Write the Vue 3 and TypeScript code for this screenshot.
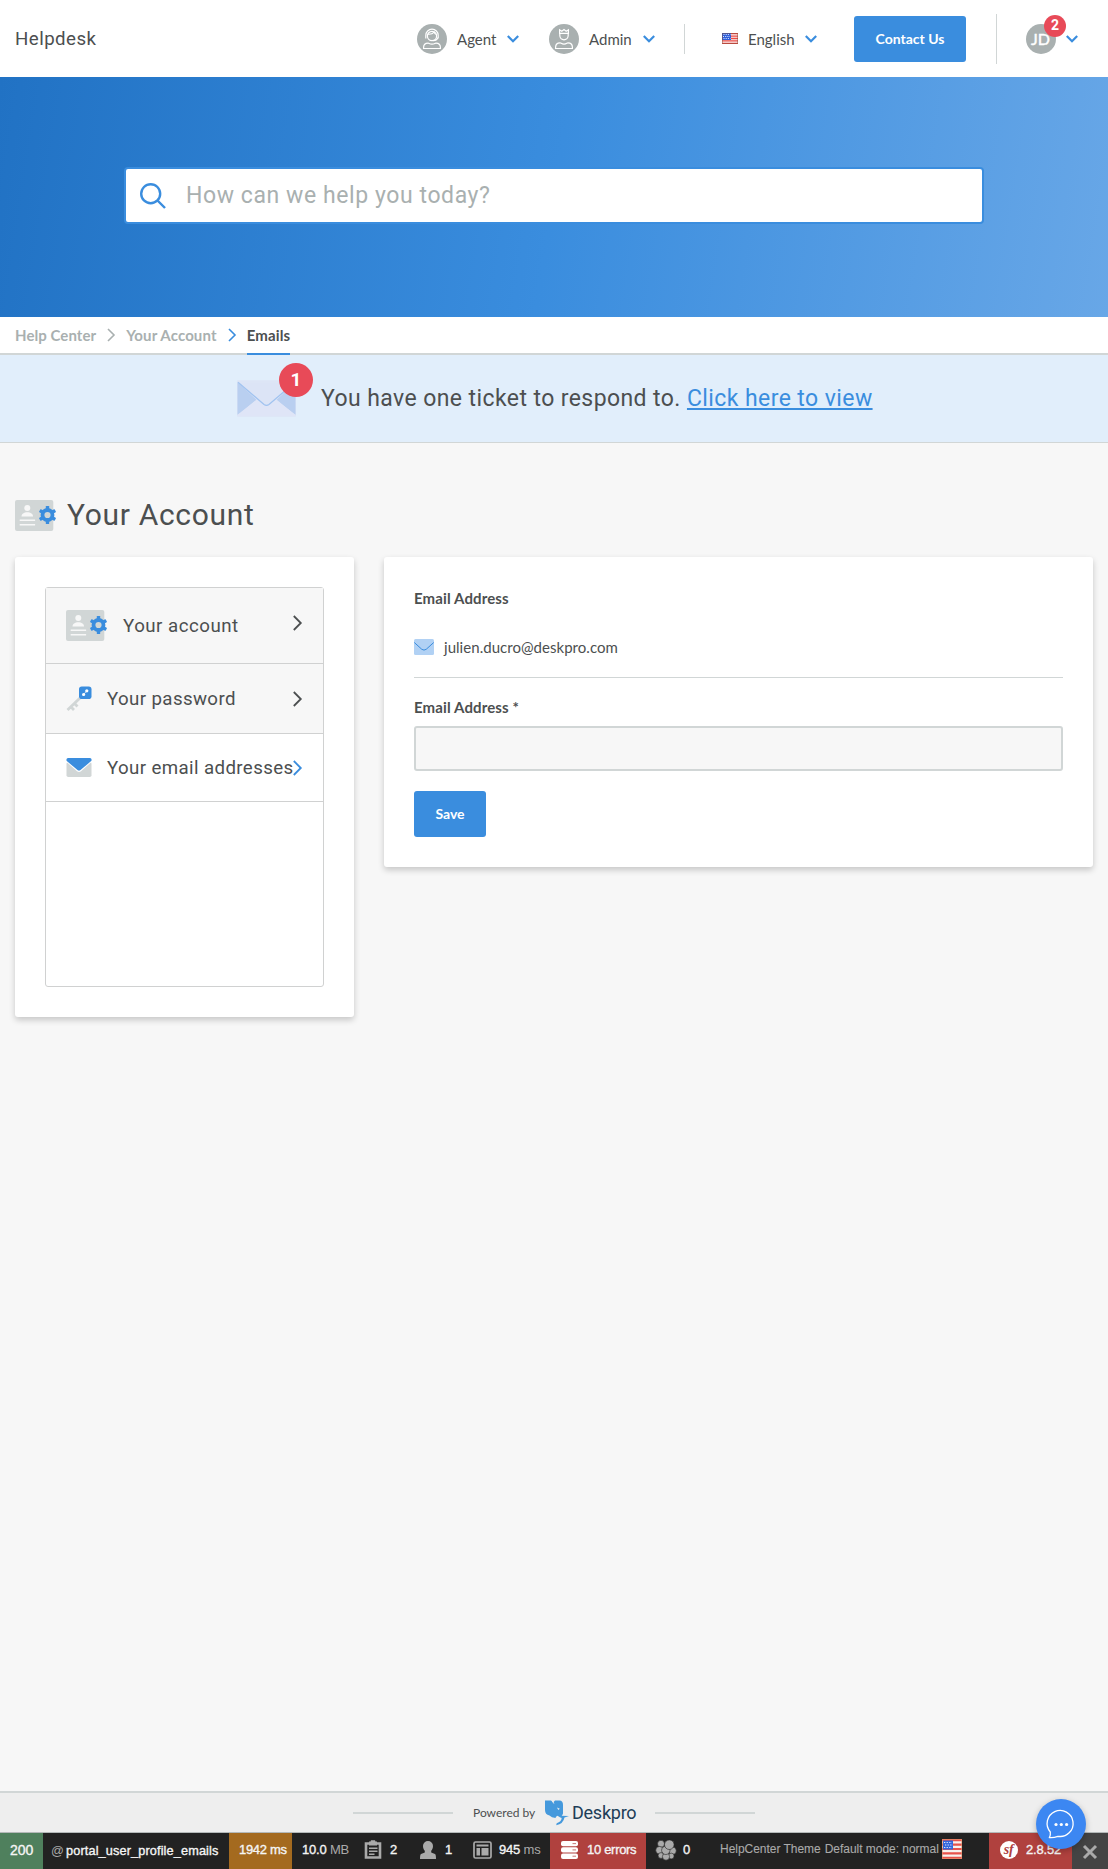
<script setup lang="ts">
interface MenuItem {
  label: string
  icon: 'card' | 'key' | 'mail'
  height: number
  active?: boolean
}

const menu: MenuItem[] = [
  { label: 'Your account', icon: 'card', height: 76 },
  { label: 'Your password', icon: 'key', height: 70 },
  { label: 'Your email addresses', icon: 'mail', height: 68, active: true },
]

const cogTeeth = [0, 60, 120, 180, 240, 300]
</script>

<template>
  <div class="page">
    <header class="header">
      <div class="brand">Helpdesk</div>
      <nav class="nav">
        <a class="nav-item agent">
          <svg class="avatar" viewBox="0 0 30 30">
            <circle cx="15" cy="15" r="15" fill="#a9b0b0" />
            <g fill="none" stroke="#fff" stroke-width="1.2">
              <circle cx="15" cy="12" r="4.6" />
              <path d="M8.8 14.5V11.4a6.2 6.2 0 0 1 12.4 0v3.1M20.6 13.5c0 2-1.6 3-4.6 3.2M10.8 10.2c3.5.3 5-.5 6.4-2 .3 1.4 1 2 2.2 2.3" />
              <path d="M6.6 24.5v-1.2c0-2.6 1.8-4.2 4.5-4.2 1 0 1.4 1 3.9 1s2.9-1 3.9-1c2.7 0 4.5 1.6 4.5 4.2v1.2z" />
            </g>
          </svg>
          <span>Agent</span>
          <svg class="caret" viewBox="0 0 12 8"><path d="M.8 1 6 6.2 11.2 1" /></svg>
        </a>
        <a class="nav-item admin">
          <svg class="avatar" viewBox="0 0 30 30">
            <circle cx="15" cy="15" r="15" fill="#a9b0b0" />
            <g fill="none" stroke="#fff" stroke-width="1.2">
              <path d="M10.6 9.4V5.8l2.2 1.4L15 5.5l2.2 1.7 2.2-1.4v3.6zM10.8 9.4v2.2a4.2 4.2 0 0 0 8.4 0V9.4" />
              <path d="M6.6 24.5v-1.2c0-2.6 1.8-4.5 4.5-4.5 1 0 1.4 1.3 3.9 1.3s2.9-1.3 3.9-1.3c2.7 0 4.5 1.9 4.5 4.5v1.2z" />
            </g>
          </svg>
          <span>Admin</span>
          <svg class="caret" viewBox="0 0 12 8"><path d="M.8 1 6 6.2 11.2 1" /></svg>
        </a>
        <i class="divider short"></i>
        <a class="nav-item language">
          <svg class="flag" viewBox="0 0 16 11">
            <rect width="16" height="11" fill="#f6f1f0" />
            <path d="M0 .7h16M0 3.1h16M0 5.5h16M0 7.9h16M0 10.3h16" stroke="#ed4b45" stroke-width="1.3" />
            <rect width="9" height="7" fill="#2f5fda" />
            <path d="M1.5 1.5h7M1 3.5h7M1.5 5.5h7" stroke="#dfe8ff" stroke-width="1" stroke-dasharray="1 1.2" />
            <rect x=".5" y=".5" width="15" height="10" fill="none" stroke="#7a4a38" stroke-opacity=".45" />
          </svg>
          <span>English</span>
          <svg class="caret" viewBox="0 0 12 8"><path d="M.8 1 6 6.2 11.2 1" /></svg>
        </a>
        <button class="button contact">Contact Us</button>
        <i class="divider tall"></i>
        <a class="user">
          <span class="initials">JD</span>
          <b class="count">2</b>
          <svg class="caret" viewBox="0 0 12 8"><path d="M.8 1 6 6.2 11.2 1" /></svg>
        </a>
      </nav>
    </header>

    <section class="hero">
      <div class="search">
        <svg viewBox="0 0 26 26"><circle cx="10.7" cy="10.7" r="9.5" /><path d="m17.5 17.5 7.5 7.5" /></svg>
        <span>How can we help you today?</span>
      </div>
    </section>

    <nav class="crumbs">
      <a class="root">Help Center</a>
      <svg viewBox="0 0 8 14"><path d="m1 1 6 6-6 6" /></svg>
      <a>Your Account</a>
      <svg class="blue" viewBox="0 0 8 14"><path d="m1 1 6 6-6 6" /></svg>
      <a class="current">Emails</a>
    </nav>

    <section class="notice">
      <div class="letter">
        <svg viewBox="0 0 60 37">
          <rect width="60" height="37" rx="1" fill="#dde5f6" />
          <path d="M.5 2v33L20 20zM59.5 2v33L40 20z" fill="#b9cff0" />
          <path d="m0 36 20-16.5 10 6.5 10-6.5L60 36z" fill="#dfe5f7" />
          <path d="m1 2 26.5 22.5q2.5 2 5 0L59 2" fill="#dce4f6" stroke="#a1c3f0" stroke-width="1.3" />
        </svg>
        <b>1</b>
      </div>
      <p>You have one ticket to respond to. <a>Click here to view</a></p>
    </section>

    <main class="content">
      <h1>
        <svg class="card-icon" viewBox="0 0 41 31">
          <rect width="38.3" height="31" rx="2" fill="#d1d6d6" />
          <g fill="#f7f7f7">
            <circle cx="12.3" cy="8" r="3" />
            <path d="M6.5 16.5c0-2.5 2.5-4.3 5.8-4.3s5.8 1.8 5.8 4.3zM4.7 19.5h15.4v1.6H4.7zM4.7 24h15.4v1.6H4.7z" />
          </g>
          <g transform="translate(32.5 15)" fill="#3a8dde">
            <circle r="5" fill="none" stroke="#3a8dde" stroke-width="3.8" />
            <rect v-for="a in cogTeeth" :key="a" x="-1.7" y="-9" width="3.4" height="3.5" rx=".6" :transform="`rotate(${a})`" />
          </g>
        </svg>
        <span>Your Account</span>
      </h1>

      <div class="columns">
        <aside class="panel side">
          <ul class="menu">
            <li v-for="item in menu" :key="item.label" :class="[item.icon, { active: item.active }]" :style="{ height: item.height + 'px' }">
              <svg v-if="item.icon === 'card'" class="card-icon" viewBox="0 0 41 31">
                <rect width="38.3" height="31" rx="2" fill="#d1d6d6" />
                <g fill="#f7f7f7">
                  <circle cx="12.3" cy="8" r="3" />
                  <path d="M6.5 16.5c0-2.5 2.5-4.3 5.8-4.3s5.8 1.8 5.8 4.3zM4.7 19.5h15.4v1.6H4.7zM4.7 24h15.4v1.6H4.7z" />
                </g>
                <g transform="translate(32.5 15)" fill="#3a8dde">
                  <circle r="5" fill="none" stroke="#3a8dde" stroke-width="3.8" />
                  <rect v-for="a in cogTeeth" :key="a" x="-1.7" y="-9" width="3.4" height="3.5" rx=".6" :transform="`rotate(${a})`" />
                </g>
              </svg>
              <svg v-else-if="item.icon === 'key'" class="key-icon" viewBox="0 0 26 26">
                <path d="m14 12-12.5 12M5 21l3 3M8.5 17.5l3 3" fill="none" stroke="#d1d6d6" stroke-width="2.8" />
                <rect x="13" y=".5" width="12.5" height="12.5" rx="2.8" fill="#3a8dde" />
                <circle cx="20.8" cy="4.8" r="1.6" fill="#fff" />
                <circle cx="17.6" cy="8.5" r="1.6" fill="#fff" />
                <path d="m17.6 8.5 3.2-3.7" stroke="#fff" stroke-width=".7" />
              </svg>
              <svg v-else class="mail-icon" viewBox="0 0 26 19">
                <rect x=".5" y="4" width="25" height="15" rx="1.8" fill="#d1d6d6" />
                <path d="M-.5 3 11 13.2q2 1.6 4 0L26.5 3" fill="#fff" />
                <path d="M2 0h22q1.5 0 1.5 1.5v1.3L14.5 12q-1.5 1.2-3 0L.5 2.8V1.5Q.5 0 2 0z" fill="#3a8dde" />
              </svg>
              <span>{{ item.label }}</span>
              <svg class="chevron" viewBox="0 0 9 16"><path d="m.8 1 7 7-7 7" /></svg>
            </li>
          </ul>
        </aside>

        <section class="panel form">
          <h2>Email Address</h2>
          <div class="address">
            <svg viewBox="0 0 20 16">
              <rect width="20" height="16" rx="1.5" fill="#b1d1f4" />
              <path d="m.3 3.5 7.5 6.8q2.2 1.6 4.4 0l7.5-6.8" fill="none" stroke="#3a8dde" stroke-width="1" />
            </svg>
            <span>julien.ducro@deskpro.com</span>
          </div>
          <label for="email">Email Address *</label>
          <input id="email" type="text" />
          <button class="button save">Save</button>
        </section>
      </div>
    </main>

    <footer class="footer">
      <i></i>
      <span class="powered">Powered by</span>
      <svg class="logo" viewBox="0 0 24 26">
        <path d="M0 .5h6l2.2 2L10 .5h4.5Q18 .5 18 5v8.500q-1.2 3.500-3.500 3.500l-2-1.200q-2 .8-2 2.200-4-.5-6-2.500Q0 14.500 0 10z" fill="#4599dc" />
        <path d="m12 7.500 2.800 1.200-1.500 1.400z" fill="#eee" />
        <path d="M7 1q1 3 2.500 3L8 1" fill="#eee" />
        <path d="m14.800 15.700 9.200.2-4.500 1.500q-1.200 6.500-8.300 7.800l.5-2q4.700-1.500 5-5.200l-2-.8z" fill="#4599dc" />
      </svg>
      <strong>Deskpro</strong>
      <i></i>
    </footer>

    <div class="toolbar">
      <div class="tb status">200</div>
      <div class="tb route"><em>@</em><span>portal_user_profile_emails</span></div>
      <div class="tb time">1942 ms</div>
      <div class="tb memory">10.0&nbsp;<em>MB</em></div>
      <div class="tb forms">
        <svg viewBox="0 0 18 19"><path d="M2 3.5h14v14H2z" fill="none" stroke="#aaa" stroke-width="2.6" /><path d="M5 1.5h1.5L7 .3h4l.5 1.2H13v4H5z" fill="#aaa" /><path d="M5 8.3h8.5M5 11.3h8.5M5 14.3h5.5" stroke="#aaa" stroke-width="1.5" /></svg>
        <span>2</span>
      </div>
      <div class="tb person">
        <svg viewBox="0 0 16 18"><path d="M3 5a5 5 0 0 1 10 0c0 2-.8 3.8-1.8 4.8v1.6L15 13q1 .6 1 5H0q0-4.400 1-5l3.800-1.600V9.800C3.800 8.800 3 7 3 5z" fill="#aaa" /></svg>
        <span>1</span>
      </div>
      <div class="tb render">
        <svg viewBox="0 0 19 18"><rect x="1" y="1" width="17" height="16" rx="1.5" fill="none" stroke="#aaa" stroke-width="1.7" /><path d="M3.5 3.5h12v2h-12zM3.5 7h3.500v7.500H3.500zM8.500 7h7v7.500h-7z" fill="#aaa" /></svg>
        <span>945&nbsp;<em>ms</em></span>
      </div>
      <div class="tb errors">
        <svg viewBox="0 0 17 18"><g fill="#fff"><rect width="17" height="5.3" rx="2" /><rect y="6.3" width="17" height="5.3" rx="2" /><rect y="12.6" width="17" height="5.3" rx="2" /></g><path d="M11.5 2.6h3.5M11.5 8.9h3.5M11.5 15.2h3.5" stroke="#b0413e" stroke-width=".7" /></svg>
        <span>10 errors</span>
      </div>
      <div class="tb cache">
        <svg viewBox="0 0 20 20"><g fill="#aaa" stroke="#222" stroke-width=".6"><circle cx="5" cy="3.8" r="3.5" /><circle cx="3.5" cy="10.2" r="3.8" /><circle cx="16.5" cy="10.8" r="3.8" /><circle cx="5" cy="15.5" r="2.9" /><circle cx="15.2" cy="16" r="2.9" /><circle cx="10" cy="16.6" r="3.6" /><circle cx="9.8" cy="10.3" r="4.2" /><circle cx="13.3" cy="4.7" r="4.8" /></g></svg>
        <span>0</span>
      </div>
      <div class="tb theme">
        <span>HelpCenter Theme</span><span class="mode">Default mode: normal</span>
        <svg viewBox="0 0 20 20"><rect width="20" height="20" fill="#f7f3ef" /><path d="M0 1.2h20M0 5.6h20M0 10h20M0 14.4h20M0 18.8h20" stroke="#e8534b" stroke-width="2.2" /><path d="M1 1.5h10v9H1z" fill="#3467dc" /><path d="M2 3.5h8M3 6h8M2 8.5h8" stroke="#d9e5ff" stroke-dasharray="1.3 1.3" /><rect x=".5" y=".5" width="19" height="19" fill="none" stroke="#e79a70" stroke-opacity=".6" /></svg>
      </div>
      <div class="tb version">
        <svg viewBox="0 0 18 18"><circle cx="9" cy="9" r="9" fill="#fff" /><text x="8.6" y="12.5" text-anchor="middle">sf</text></svg>
        <span>2.8.52</span>
      </div>
      <div class="tb close"><svg viewBox="0 0 16 16"><path d="m2 2 12 12M14 2 2 14" /></svg></div>
    </div>

    <button class="chat" aria-label="Chat">
      <svg viewBox="0 0 28 29"><path d="M2.5 27.5q1.2-2.5.8-5.5A13 13 0 1 1 11 26.3q-4.5 1.5-8.5 1.2z" /><g fill="#fff"><circle cx="9" cy="14.5" r="1.6" /><circle cx="14.3" cy="14.5" r="1.6" /><circle cx="19.6" cy="14.5" r="1.6" /></g></svg>
    </button>
  </div>
</template>

<style>
body {
  margin: 0;
  background: #f7f7f7;
}
</style>

<style scoped>
* {
  box-sizing: border-box;
}
svg {
  display: block;
  flex: none;
  overflow: visible;
}
.page {
  position: relative;
  display: flex;
  flex-direction: column;
  width: 1108px;
  height: 1869px;
  overflow: hidden;
  background: #f7f7f7;
  color: #4c4f50;
  font-family: Lato, sans-serif;
  font-size: 15px;
}
.header {
  flex: none;
  display: flex;
  justify-content: space-between;
  height: 77px;
  padding: 0 30px 0 15px;
  background: #fff;
}
.brand {
  font: 18.7px/79px Roboto, sans-serif;
  letter-spacing: 0.45px;
}
.nav,
.nav-item,
.user {
  display: flex;
  align-items: center;
}
.nav-item span {
  line-height: 20px;
  padding-top: 1px;
  white-space: nowrap;
}
.agent span {
  width: 39px;
}
.admin span {
  width: 42px;
}
.avatar {
  width: 30px;
  height: 30px;
  margin-right: 10px;
}
.caret {
  width: 12px;
  height: 8px;
  margin-left: 11px;
  fill: none;
  stroke: #3a8dde;
  stroke-width: 2.2;
}
.admin {
  margin-left: 30px;
}
.admin .caret {
  margin-left: 12px;
}
.divider {
  width: 1px;
  background: #d1d6d6;
}
.short {
  height: 30px;
  margin: 0 37px 0 29px;
}
.flag {
  width: 16px;
  height: 11px;
  margin-right: 10px;
}
.language span {
  width: 46px;
  padding: 0;
}
.button {
  border: 0;
  border-radius: 3px;
  background: #3a8dde;
  color: #fff;
  font: 700 14px Lato, sans-serif;
}
.contact {
  width: 112px;
  height: 46px;
  margin-left: 37px;
}
.tall {
  height: 50px;
  margin: 0 29px 0 30px;
}
.user {
  position: relative;
}
.initials {
  width: 30px;
  height: 30px;
  padding-right: 1px;
  border-radius: 50%;
  background: #a9b0b0;
  color: #fff;
  font: 16px/30px Lato, sans-serif;
  text-align: center;
  -webkit-text-stroke: 0.4px #fff;
}
.user .caret {
  margin-left: 10px;
}
.count {
  position: absolute;
  left: 18px;
  top: -9px;
  width: 22px;
  height: 22px;
  border-radius: 50%;
  background: #e84a58;
  color: #fff;
  font: 700 14px/21px Roboto, sans-serif;
  text-align: center;
}
.hero {
  flex: none;
  height: 240px;
  padding-top: 90px;
  background: linear-gradient(99deg, #2172c4 0%, #3a8dde 50%, #68a7e7 100%);
}
.search {
  display: flex;
  align-items: center;
  width: 860px;
  height: 57px;
  margin: 0 auto;
  padding-left: 14px;
  border: 2px solid #3a8dde;
  border-radius: 4px;
  background: #fff;
  color: #a9b0b0;
  font: 23px Roboto, sans-serif;
}
.search svg {
  width: 26px;
  height: 26px;
  margin-right: 20px;
  fill: none;
  stroke: #3a8dde;
  stroke-width: 2.4;
}
.search span {
  letter-spacing: 0.58px;
}
.crumbs {
  flex: none;
  display: flex;
  align-items: center;
  height: 38px;
  padding-left: 15px;
  border-bottom: 2px solid #d1d6d6;
  background: #fff;
  color: #a9b0b0;
  font-weight: 700;
  line-height: 36px;
  letter-spacing: 0.13px;
}
.root {
  letter-spacing: 0.06px;
}
.crumbs svg {
  width: 8px;
  height: 14px;
  margin: 0 11px;
  fill: none;
  stroke: #a9b0b0;
  stroke-width: 1.6;
}
.crumbs .blue {
  stroke: #3a8dde;
}
.current {
  height: 38px;
  margin-bottom: -2px;
  border-bottom: 2px solid #3a8dde;
  color: #4c4f50;
}
.notice {
  flex: none;
  display: flex;
  align-items: center;
  height: 88px;
  padding-left: 237px;
  border-bottom: 1px solid #d1d6d6;
  background: #e1eefb;
}
.letter {
  position: relative;
  width: 84px;
}
.letter svg {
  width: 59px;
  height: 37px;
}
.letter b {
  position: absolute;
  left: 42px;
  top: -17px;
  width: 34px;
  height: 34px;
  border-radius: 50%;
  background: #e84a58;
  color: #fff;
  font: 700 19px/34px Roboto, sans-serif;
  text-align: center;
}
.notice p {
  margin: 0;
  font: 23px Roboto, sans-serif;
  letter-spacing: 0.41px;
  white-space: nowrap;
}
.notice a {
  color: #3a8dde;
  text-decoration: underline 2px;
  text-decoration-skip-ink: none;
  text-underline-offset: 2px;
}
.content {
  flex: 1;
  padding: 57px 15px 0;
}
h1 {
  display: flex;
  align-items: center;
  height: 31px;
  margin: 0 0 26px;
  font: 400 30px/31px Roboto, sans-serif;
  letter-spacing: 0.68px;
}
h1 span {
  margin-top: -2px;
}
.card-icon {
  width: 41px;
  height: 31px;
}
h1 .card-icon {
  margin-right: 11px;
}
.columns {
  display: flex;
  align-items: flex-start;
  gap: 30px;
}
.panel {
  border-radius: 3px;
  background: #fff;
  box-shadow: 0 3px 6px rgba(0, 0, 0, 0.2);
}
.side {
  width: 339px;
  height: 460px;
  padding: 30px;
}
.menu {
  height: 400px;
  margin: 0;
  padding: 0;
  border: 1px solid #d0d1d1;
  border-radius: 3px;
  list-style: none;
}
.menu li {
  display: flex;
  align-items: center;
  padding: 0 21px 0 20px;
  border-bottom: 1px solid #d0d1d1;
  background: #f7f7f7;
  font: 18.7px Roboto, sans-serif;
  letter-spacing: 0.38px;
  white-space: nowrap;
}
.menu li span {
  min-width: 0;
}
.menu .card {
  letter-spacing: 0.5px;
}
.menu .active {
  background: #fff;
}
.menu .card-icon {
  margin-right: 16px;
}
.key-icon,
.mail-icon {
  width: 26px;
  margin-right: 15px;
}
.key-icon {
  height: 26px;
}
.mail-icon {
  height: 19px;
}
.chevron {
  width: 9px;
  height: 16px;
  margin-left: auto;
  fill: none;
  stroke: #4c4f50;
  stroke-width: 1.8;
}
.active .chevron {
  stroke: #3a8dde;
}
.card .chevron {
  margin-bottom: 5px;
}
.form {
  width: 709px;
  height: 310px;
  padding: 32px 30px 0;
}
h2,
label {
  display: block;
  margin: 0;
  font-size: 15px;
  font-weight: 700;
  line-height: 18px;
  letter-spacing: 0.12px;
}
.address {
  display: flex;
  align-items: center;
  height: 71px;
  padding-top: 10px;
  border-bottom: 1px solid #d1d6d6;
}
.address svg {
  width: 20px;
  height: 16px;
  margin-right: 10px;
}
.address span {
  letter-spacing: 0.04px;
}
label {
  margin-top: 20px;
}
input {
  display: block;
  width: 649px;
  height: 45px;
  margin-top: 10px;
  border: 2px solid #d1d6d6;
  border-radius: 3px;
  background: #f7f7f7;
}
.save {
  display: block;
  width: 72px;
  height: 46px;
  margin-top: 20px;
  padding-bottom: 3px;
}
.footer {
  flex: none;
  display: flex;
  align-items: center;
  height: 42px;
  padding-left: 353px;
  border-top: 2px solid #d1d6d6;
  border-bottom: 1px solid #b4b9b9;
  background: #eee;
}
.footer i {
  width: 100px;
  height: 2px;
  background: #d1d6d6;
}
.powered {
  width: 72px;
  margin-left: 20px;
  font-size: 12px;
}
.logo {
  width: 24px;
  height: 26px;
  margin-top: 1px;
}
.footer strong {
  width: 68px;
  margin: 0 15px 0 3px;
  color: #203d57;
  font: 400 18px/20px Roboto, sans-serif;
  letter-spacing: -0.25px;
}
.toolbar {
  flex: none;
  display: flex;
  height: 36px;
  background: #222;
  color: #f5f5f5;
  font: 13px "Liberation Sans", Arial, sans-serif;
  letter-spacing: -0.2px;
}
.tb {
  flex: none;
  display: flex;
  align-items: center;
  height: 36px;
  padding-bottom: 3px;
  white-space: nowrap;
  -webkit-text-stroke: 0.35px currentColor;
}
.tb em {
  color: #aaa;
  font-style: normal;
  -webkit-text-stroke: 0;
}
.status {
  width: 43px;
  padding-left: 10px;
  background: #4f805d;
  font-size: 14px;
  letter-spacing: 0;
}
.route {
  width: 186px;
  padding: 0 0 1px 8px;
  font-size: 12.7px;
  letter-spacing: 0.14px;
}
.route em {
  margin-right: 2px;
}
.time {
  width: 63px;
  padding-left: 10px;
  background: #a46a1f;
  letter-spacing: -0.3px;
}
.memory {
  width: 72px;
  padding-left: 10px;
}
.forms {
  width: 56px;
}
.forms svg {
  width: 18px;
  height: 19px;
  margin-right: 8px;
}
.person {
  width: 53px;
}
.person svg {
  width: 16px;
  height: 18px;
  margin-right: 9px;
}
.render {
  width: 77px;
}
.render svg {
  width: 19px;
  height: 18px;
  margin-right: 7px;
}
.errors {
  width: 96px;
  padding-left: 11px;
  background: #b0413e;
  letter-spacing: -0.3px;
}
.errors svg {
  width: 17px;
  height: 18px;
  margin-right: 9px;
}
.cache {
  width: 74px;
  padding-left: 10px;
}
.cache svg {
  width: 20px;
  height: 20px;
  margin-right: 7px;
}
.theme {
  width: 269px;
  padding-bottom: 4px;
  color: #aaa;
  font-size: 12px;
  letter-spacing: -0.03px;
  -webkit-text-stroke: 0.1px currentColor;
}
.mode {
  margin-left: 4px;
}
.theme svg {
  width: 20px;
  height: 20px;
  margin-left: 3px;
}
.version {
  width: 83px;
  padding-left: 11px;
  background: #b0413e;
}
.version svg {
  width: 18px;
  height: 18px;
  margin-right: 8px;
}
.version text {
  fill: #b0413e;
  font: italic 700 14px "Liberation Serif", serif;
  -webkit-text-stroke: 0;
}
.close {
  width: 36px;
  justify-content: center;
  padding: 2px 0 0;
  background: #444;
}
.close svg {
  width: 16px;
  height: 16px;
  stroke: #aaa;
  stroke-width: 3;
}
.chat {
  position: absolute;
  right: 22px;
  bottom: 20px;
  display: flex;
  align-items: center;
  justify-content: center;
  width: 50px;
  height: 50px;
  padding: 0;
  border: 0;
  border-radius: 50%;
  background: #3c87f2;
  box-shadow: 0 2px 6px rgba(0, 0, 0, 0.25);
}
.chat svg {
  width: 28px;
  height: 29px;
  fill: none;
  stroke: #fff;
  stroke-width: 1.3;
}
.chat g {
  stroke: none;
}
</style>
